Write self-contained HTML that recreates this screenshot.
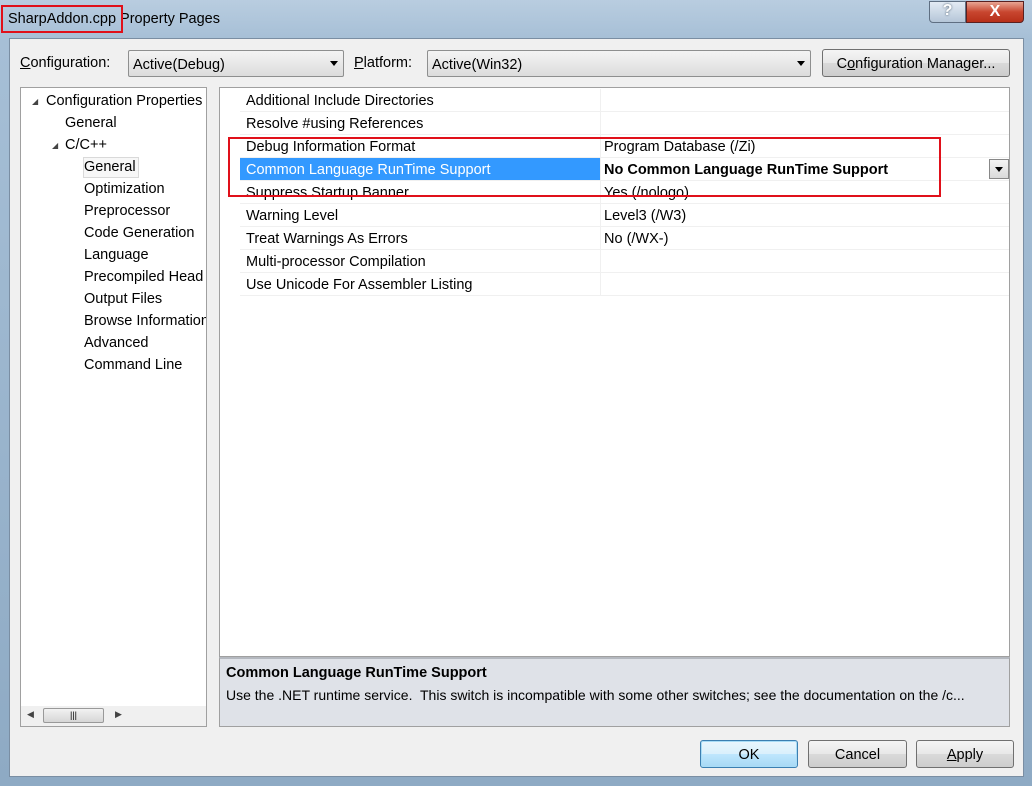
<!DOCTYPE html>
<html><head><style>
*{box-sizing:border-box;margin:0;padding:0}
body{width:1032px;height:786px;overflow:hidden;position:relative;font-family:"Liberation Sans",sans-serif;font-size:14.5px;color:#000;
background:linear-gradient(180deg,#b9cde0 0%,#a6bfd6 5%,#8eaac4 100%)}
.a{position:absolute;white-space:nowrap}
.client{position:absolute;left:9px;top:38px;width:1015px;height:739px;background:#f0f0f0;border:1px solid #7a8ea3}
.combo{position:absolute;height:27px;background:linear-gradient(#f4f4f4,#dcdcdc);border:1px solid #8e8f8f;border-radius:2px;padding:6px 4px;}
.btn{position:absolute;height:28px;background:linear-gradient(#f5f5f5 0%,#e8e8e8 50%,#d9d9d9 51%,#cdcdcd 100%);border:1px solid #707070;border-radius:3px;text-align:center;line-height:28px}
.tri{position:absolute;width:0;height:0;border-left:4px solid transparent;border-right:4px solid transparent;border-top:5px solid #000}
.row{position:absolute;left:240px;width:769px;height:23px;border-bottom:1px solid #f0f0f0}
.row span{position:absolute;top:4px}
.tree{position:absolute;left:20px;top:87px;width:187px;height:640px;background:#fff;border:1px solid #a0a0a0;overflow:hidden}
.t{position:absolute;white-space:nowrap}
</style></head><body>
<div class="a" style="left:8px;top:11px;font-size:14.5px">SharpAddon.cpp Property Pages</div>
<div class="a" style="left:1px;top:5px;width:122px;height:28px;border:2px solid #e0101a"></div>
<div class="a" style="left:929px;top:1px;width:37px;height:22px;border:1px solid #5f6f82;border-radius:0 0 0 4px;background:linear-gradient(#e3ebf4,#b5c6d8);text-align:center;color:#fff;font-weight:bold;font-size:16px;text-shadow:0 0 2px #456">?</div>
<div class="a" style="left:966px;top:1px;width:58px;height:22px;border:1px solid #5a2020;border-radius:0 0 4px 0;background:linear-gradient(#e8a593,#c8462f 50%,#b72f19);text-align:center;color:#fff;font-weight:bold;font-size:16px;line-height:20px">X</div>
<div class="client"></div>
<div class="a" style="left:20px;top:55px"><u>C</u>onfiguration:</div>
<div class="combo" style="left:128px;top:50px;width:216px">Active(Debug)<div class="tri" style="right:5px;top:10px"></div></div>
<div class="a" style="left:354px;top:55px"><u>P</u>latform:</div>
<div class="combo" style="left:427px;top:50px;width:384px">Active(Win32)<div class="tri" style="right:5px;top:10px"></div></div>
<div class="btn" style="left:822px;top:49px;width:188px;height:28px">C<u>o</u>nfiguration Manager...</div>

<div class="tree">
<div class="t" style="left:11px;top:9px;font-size:8px;color:#444">◢</div>
<div class="t" style="left:25px;top:5px">Configuration Properties</div>
<div class="t" style="left:44px;top:27px">General</div>
<div class="t" style="left:31px;top:53px;font-size:8px;color:#444">◢</div>
<div class="t" style="left:44px;top:49px">C/C++</div>
<div class="t" style="left:62px;top:69px;width:56px;height:21px;border:1px solid #d9d9d9;background:#f7f7f7"></div>
<div class="t" style="left:63px;top:71px">General</div>
<div class="t" style="left:63px;top:93px">Optimization</div>
<div class="t" style="left:63px;top:115px">Preprocessor</div>
<div class="t" style="left:63px;top:137px">Code Generation</div>
<div class="t" style="left:63px;top:159px">Language</div>
<div class="t" style="left:63px;top:181px">Precompiled Head</div>
<div class="t" style="left:63px;top:203px">Output Files</div>
<div class="t" style="left:63px;top:225px">Browse Information</div>
<div class="t" style="left:63px;top:247px">Advanced</div>
<div class="t" style="left:63px;top:269px">Command Line</div>
<div class="t" style="left:0;top:618px;width:185px;height:20px;background:#f0f0f0;overflow:hidden">
<div class="t" style="left:22px;top:2px;width:61px;height:15px;border:1px solid #999;border-radius:2px;background:linear-gradient(#f2f2f2,#d6d6d6);text-align:center;font-size:9px;line-height:13px">|||</div>
<div class="t" style="left:6px;top:3px;font-size:9px;color:#444">◀</div>
<div class="t" style="left:94px;top:3px;font-size:9px;color:#444">▶</div>
</div>
</div>

<div class="a" style="left:219px;top:87px;width:791px;height:570px;background:#fff;border:1px solid #a0a0a0"></div>
<div class="a" style="left:600px;top:89px;width:1px;height:207px;background:#f0f0f0"></div>
<div class="row" style="top:89px"><span style="left:6px">Additional Include Directories</span></div>
<div class="row" style="top:112px"><span style="left:6px">Resolve #using References</span></div>
<div class="row" style="top:135px"><span style="left:6px">Debug Information Format</span><span style="left:364px">Program Database (/Zi)</span></div>
<div class="row" style="top:158px"><div class="a" style="left:0;top:0;width:360px;height:22px;background:#3399ff"></div><span style="left:6px;color:#fff">Common Language RunTime Support</span><span style="left:364px;font-weight:bold">No Common Language RunTime Support</span>
<div class="a" style="left:749px;top:1px;width:20px;height:20px;border:1px solid #888;background:linear-gradient(#f4f4f4,#dadada)"><div class="tri" style="left:5px;top:7px"></div></div></div>
<div class="row" style="top:181px"><span style="left:6px">Suppress Startup Banner</span><span style="left:364px">Yes (/nologo)</span></div>
<div class="row" style="top:204px"><span style="left:6px">Warning Level</span><span style="left:364px">Level3 (/W3)</span></div>
<div class="row" style="top:227px"><span style="left:6px">Treat Warnings As Errors</span><span style="left:364px">No (/WX-)</span></div>
<div class="row" style="top:250px"><span style="left:6px">Multi-processor Compilation</span></div>
<div class="row" style="top:273px"><span style="left:6px">Use Unicode For Assembler Listing</span></div>
<div class="a" style="left:228px;top:137px;width:713px;height:60px;border:2px solid #e0101a"></div>

<div class="a" style="left:219px;top:657px;width:791px;height:70px;background:#dfe2e8;border:1px solid #a0a0a0;border-top:2px solid #b4b8bf"></div>
<div class="a" style="left:226px;top:665px;font-weight:bold">Common Language RunTime Support</div>
<div class="a" style="left:226px;top:687px;font-size:14px">Use the .NET runtime service.&nbsp; This switch is incompatible with some other switches; see the documentation on the /c...</div>

<div class="btn" style="left:700px;top:740px;width:98px;border-color:#3c7fb1;box-shadow:inset 0 0 0 1px #a8dcf6;background:linear-gradient(#eaf6fd,#d9f0fc 50%,#bee6fd 51%,#a7d9f5)">OK</div>
<div class="btn" style="left:808px;top:740px;width:99px">Cancel</div>
<div class="btn" style="left:916px;top:740px;width:98px"><u>A</u>pply</div>
</body></html>
